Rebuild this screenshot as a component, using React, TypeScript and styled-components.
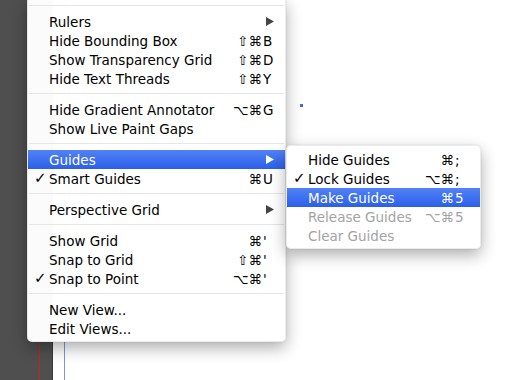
import styled, { createGlobalStyle } from 'styled-components'

const GlobalStyle = createGlobalStyle`
  html, body {
    margin: 0;
    padding: 0;
    background: #ffffff;
  }
  body {
    font-family: 'DejaVu Sans', 'Liberation Sans', sans-serif;
  }
`

const Stage = styled.div`
  position: relative;
  display: flex;
  width: 510px;
  height: 380px;
  overflow: hidden;
  background: #ffffff;
`

const Sidebar = styled.div`
  width: 52px;
  flex-shrink: 0;
  background: #4f4f4f;
  border-right: 1px solid #3a3a3a;
  display: flex;
`

const RedRule = styled.div`
  margin-left: 39px;
  width: 1px;
  background: #c02424;
`

const Artboard = styled.div`
  flex: 1;
  display: flex;
  background: #ffffff;
`

const BlueRule = styled.div`
  margin-left: 11px;
  width: 1px;
  background: #7e95dc;
`

const Anchor = styled.div`
  position: absolute;
  left: 300px;
  top: 104px;
  width: 3px;
  height: 3px;
  background: #3d6be3;
`

const Menu = styled.div<{ $left: number; $top: number; $width: number; $padTop: number }>`
  position: absolute;
  left: ${({ $left }) => $left}px;
  top: ${({ $top }) => $top}px;
  width: ${({ $width }) => $width}px;
  padding: ${({ $padTop }) => $padTop}px 0 3px;
  background: rgba(255, 255, 255, 0.98);
  border: 1px solid rgba(0, 0, 0, 0.08);
  border-radius: ${({ $top }) => ($top <= 0 ? '0 0 5px 5px' : '5px')};
  box-shadow: 0 6px 16px rgba(0, 0, 0, 0.32), 0 0 2px rgba(0, 0, 0, 0.12);
  box-sizing: border-box;
  font-size: 13.5px;
  z-index: ${({ $top }) => ($top <= 0 ? 1 : 2)};
`

const Row = styled.div<{ $active?: boolean; $disabled?: boolean; $padRight: number }>`
  position: relative;
  display: flex;
  align-items: center;
  height: 19px;
  padding-right: ${({ $padRight }) => $padRight}px;
  color: ${({ $active, $disabled }) => ($active ? '#ffffff' : $disabled ? '#a3a3a3' : '#000000')};
  background: ${({ $active }) => ($active ? 'linear-gradient(#5282f6, #2b5fea)' : 'transparent')};
  white-space: nowrap;
`

const Gutter = styled.span`
  width: 21px;
  padding-left: 6px;
  box-sizing: border-box;
  flex-shrink: 0;
  font-size: 15px;
  line-height: 19px;
`

const Label = styled.span`
  flex: 1;
`

const Mods = styled.span`
  text-align: right;
`

const Key = styled.span`
  width: 12px;
  padding-left: 1px;
  text-align: left;
`

const Separator = styled.div`
  height: 1px;
  margin: 5px 1px 6px;
  background: #e6e6e6;
`

const Arrow = ({ color }: { color: string }) => (
  <svg width='8' height='9' viewBox='0 0 8 9' style={{ marginRight: 1 }}>
    <path d='M0 0 L8 4.5 L0 9 Z' fill={color} />
  </svg>
)

type Item = {
  label?: string
  mods?: string
  key?: string
  checked?: boolean
  submenu?: boolean
  active?: boolean
  disabled?: boolean
  sep?: boolean
}

const viewItems: Item[] = [
  { sep: true },
  { label: 'Rulers', submenu: true },
  { label: 'Hide Bounding Box', mods: '⇧⌘', key: 'B' },
  { label: 'Show Transparency Grid', mods: '⇧⌘', key: 'D' },
  { label: 'Hide Text Threads', mods: '⇧⌘', key: 'Y' },
  { sep: true },
  { label: 'Hide Gradient Annotator', mods: '⌥⌘', key: 'G' },
  { label: 'Show Live Paint Gaps' },
  { sep: true },
  { label: 'Guides', submenu: true, active: true },
  { label: 'Smart Guides', mods: '⌘', key: 'U', checked: true },
  { sep: true },
  { label: 'Perspective Grid', submenu: true },
  { sep: true },
  { label: 'Show Grid', mods: '⌘', key: "'" },
  { label: 'Snap to Grid', mods: '⇧⌘', key: "'" },
  { label: 'Snap to Point', mods: '⌥⌘', key: "'", checked: true },
  { sep: true },
  { label: 'New View...' },
  { label: 'Edit Views...' },
]

const guideItems: Item[] = [
  { label: 'Hide Guides', mods: '⌘', key: ';' },
  { label: 'Lock Guides', mods: '⌥⌘', key: ';', checked: true },
  { label: 'Make Guides', mods: '⌘', key: '5', active: true },
  { label: 'Release Guides', mods: '⌥⌘', key: '5', disabled: true },
  { label: 'Clear Guides', disabled: true },
]

function MenuRows({ items, padRight }: { items: Item[]; padRight: number }) {
  return (
    <>
      {items.map((item, index) =>
        item.sep ? (
          <Separator key={`sep-${index}`} />
        ) : (
          <Row
            key={`row-${index}-${item.label}`}
            $active={item.active}
            $disabled={item.disabled}
            $padRight={padRight}
          >
            <Gutter>{item.checked ? '✓' : ''}</Gutter>
            <Label>{item.label}</Label>
            {item.submenu && <Arrow color={item.active ? '#ffffff' : '#444444'} />}
            {item.key && (
              <>
                <Mods>{item.mods}</Mods>
                <Key>{item.key}</Key>
              </>
            )}
          </Row>
        )
      )}
    </>
  )
}

export default function App() {
  return (
    <Stage>
      <GlobalStyle />
      <Sidebar>
        <RedRule />
      </Sidebar>
      <Artboard>
        <BlueRule />
      </Artboard>
      <Anchor />
      <Menu $left={27} $top={-1} $width={259} $padTop={0}>
        <MenuRows items={viewItems} padRight={10} />
      </Menu>
      <Menu $left={286} $top={145} $width={195} $padTop={4}>
        <MenuRows items={guideItems} padRight={13} />
      </Menu>
    </Stage>
  )
}
